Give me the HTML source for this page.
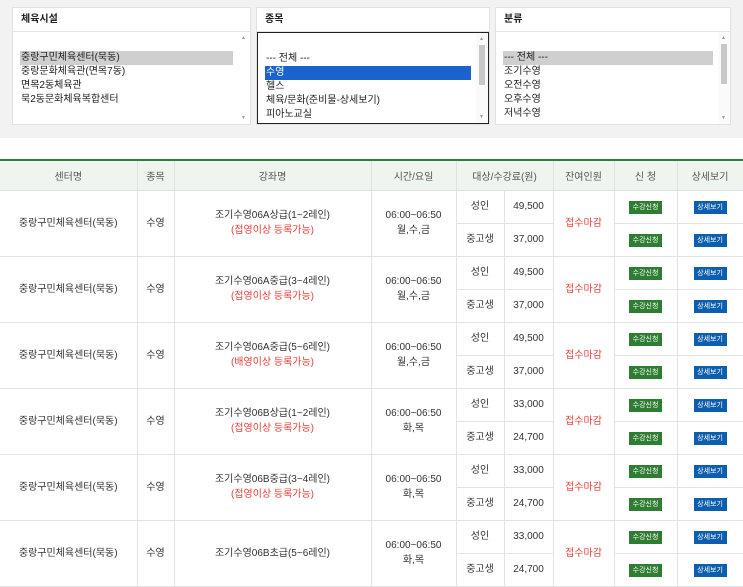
<!DOCTYPE html>
<html><head><meta charset="utf-8"><style>
*{margin:0;padding:0;box-sizing:border-box}
body{width:743px;height:567px;overflow:hidden;background:#fff;font-family:"Liberation Sans","Noto Sans CJK KR",sans-serif;font-size:10px;color:#333;position:relative}
.top{position:absolute;left:0;top:0;width:743px;height:138px;background:#f2f2f2}
.pn{position:absolute;top:7px;height:118px;background:#fff;border:1px solid #e2e2e2}
.pn .h{height:24px;border-bottom:1px solid #e4e4e4;font-weight:bold;font-size:10px;line-height:12px;padding:6px 8px;color:#222}
.pn .l{position:absolute;top:24px;left:0;right:0;bottom:0;padding-top:19px;overflow:hidden}
.pn .l div{height:14px;line-height:14px;overflow:hidden;padding-left:1px;margin-left:7px;font-size:10px;color:#222;margin-right:17px;white-space:nowrap}
.pn .l div.sb{position:absolute;right:0;top:0;bottom:0;width:12px;height:auto;margin:0;padding:0;background:#fafafa}
.sb i{position:absolute;left:3px;width:6px;background:#c8c8c8;top:12px;height:40px}
.sb b{position:absolute;left:3px;font-size:5px;line-height:6px;color:#999;font-weight:normal}
table{position:absolute;left:0;top:159px;width:743px;border-collapse:collapse;table-layout:fixed;border-top:2px solid #2f7d3a}
th{height:30px;background:#eef5ef;font-weight:normal;color:#555;border:1px solid #e0e0e0;border-top:0;font-size:10px}
td{height:33px;border:1px solid #e3e3e3;text-align:center;color:#333;font-size:10px;line-height:15px}
th:first-child,td.f{border-left:0}
.r{color:#e8413a}
.g,.b{display:inline-block;width:33px;height:13px;line-height:13px;color:#fff;font-size:7px}
.g{background:#2e7d32}.b{background:#0d5fae}
</style></head><body>
<div class="top"></div>
<div class="pn" style="left:12px;width:239px"><div class="h">체육시설</div><div class="l">
<div style="background:#cfcfcf">중랑구민체육센터(묵동)</div><div>중랑문화체육관(면목7동)</div><div>면목2동체육관</div><div>묵2동문화체육복합센터</div><div class="sb" style="background:#fff"><b style="top:3px">▲</b><b style="bottom:3px">▼</b></div></div></div>
<div class="pn" style="left:256px;width:234px"><div class="h">종목</div><div class="l" style="border:1px solid #222">
<div>--- 전체 ---</div><div style="background:#1a63cf;color:#fff">수영</div><div>헬스</div><div>체육/문화(준비물-상세보기)</div><div>피아노교실</div><div class="sb"><i></i><b style="top:3px">▲</b><b style="bottom:3px">▼</b></div></div></div>
<div class="pn" style="left:495px;width:236px"><div class="h">분류</div><div class="l">
<div style="background:#cfcfcf">--- 전체 ---</div><div>조기수영</div><div>오전수영</div><div>오후수영</div><div>저녁수영</div><div class="sb"><i></i><b style="top:3px">▲</b><b style="bottom:3px">▼</b></div></div></div>
<table>
<colgroup><col style="width:137px"><col style="width:37px"><col style="width:197px"><col style="width:85px"><col style="width:48px"><col style="width:49px"><col style="width:61px"><col style="width:63px"><col style="width:66px"></colgroup>
<tr><th>센터명</th><th>종목</th><th>강좌명</th><th>시간/요일</th><th colspan="2">대상/수강료(원)</th><th>잔여인원</th><th>신 청</th><th>상세보기</th></tr>
<tr><td class="f" rowspan="2">중랑구민체육센터(묵동)</td><td rowspan="2">수영</td><td rowspan="2">조기수영06A상급(1~2레인)<br><span class="r">(접영이상 등록가능)</span></td><td rowspan="2">06:00~06:50<br>월,수,금</td><td>성인</td><td>49,500</td><td rowspan="2" class="r">접수마감</td><td><span class="g">수강신청</span></td><td><span class="b">상세보기</span></td></tr>
<tr><td>중고생</td><td>37,000</td><td><span class="g">수강신청</span></td><td><span class="b">상세보기</span></td></tr>
<tr><td class="f" rowspan="2">중랑구민체육센터(묵동)</td><td rowspan="2">수영</td><td rowspan="2">조기수영06A중급(3~4레인)<br><span class="r">(접영이상 등록가능)</span></td><td rowspan="2">06:00~06:50<br>월,수,금</td><td>성인</td><td>49,500</td><td rowspan="2" class="r">접수마감</td><td><span class="g">수강신청</span></td><td><span class="b">상세보기</span></td></tr>
<tr><td>중고생</td><td>37,000</td><td><span class="g">수강신청</span></td><td><span class="b">상세보기</span></td></tr>
<tr><td class="f" rowspan="2">중랑구민체육센터(묵동)</td><td rowspan="2">수영</td><td rowspan="2">조기수영06A중급(5~6레인)<br><span class="r">(배영이상 등록가능)</span></td><td rowspan="2">06:00~06:50<br>월,수,금</td><td>성인</td><td>49,500</td><td rowspan="2" class="r">접수마감</td><td><span class="g">수강신청</span></td><td><span class="b">상세보기</span></td></tr>
<tr><td>중고생</td><td>37,000</td><td><span class="g">수강신청</span></td><td><span class="b">상세보기</span></td></tr>
<tr><td class="f" rowspan="2">중랑구민체육센터(묵동)</td><td rowspan="2">수영</td><td rowspan="2">조기수영06B상급(1~2레인)<br><span class="r">(접영이상 등록가능)</span></td><td rowspan="2">06:00~06:50<br>화,목</td><td>성인</td><td>33,000</td><td rowspan="2" class="r">접수마감</td><td><span class="g">수강신청</span></td><td><span class="b">상세보기</span></td></tr>
<tr><td>중고생</td><td>24,700</td><td><span class="g">수강신청</span></td><td><span class="b">상세보기</span></td></tr>
<tr><td class="f" rowspan="2">중랑구민체육센터(묵동)</td><td rowspan="2">수영</td><td rowspan="2">조기수영06B중급(3~4레인)<br><span class="r">(접영이상 등록가능)</span></td><td rowspan="2">06:00~06:50<br>화,목</td><td>성인</td><td>33,000</td><td rowspan="2" class="r">접수마감</td><td><span class="g">수강신청</span></td><td><span class="b">상세보기</span></td></tr>
<tr><td>중고생</td><td>24,700</td><td><span class="g">수강신청</span></td><td><span class="b">상세보기</span></td></tr>
<tr><td class="f" rowspan="2">중랑구민체육센터(묵동)</td><td rowspan="2">수영</td><td rowspan="2">조기수영06B초급(5~6레인)</td><td rowspan="2">06:00~06:50<br>화,목</td><td>성인</td><td>33,000</td><td rowspan="2" class="r">접수마감</td><td><span class="g">수강신청</span></td><td><span class="b">상세보기</span></td></tr>
<tr><td>중고생</td><td>24,700</td><td><span class="g">수강신청</span></td><td><span class="b">상세보기</span></td></tr>
</table>
</body></html>
